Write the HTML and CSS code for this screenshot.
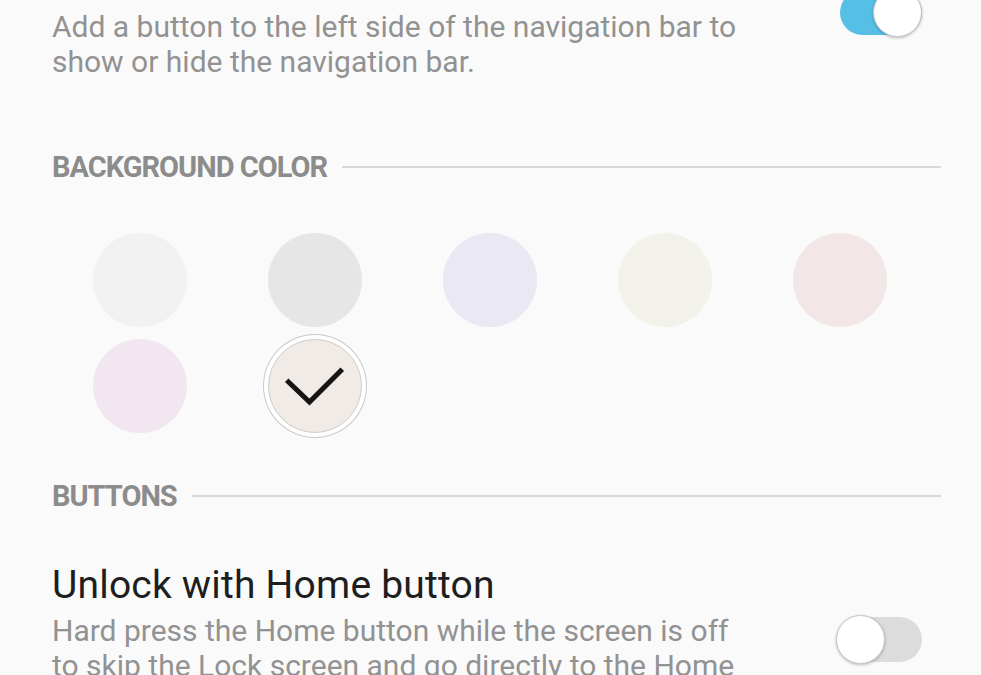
FILE: index.html
```html
<!DOCTYPE html>
<html>
<head>
<meta charset="utf-8">
<link rel="stylesheet" href="styles.css">
</head>
<body>
<div class="page">
  <div class="item item-top">
    <div class="item-text">
      <div class="desc">Add a button to the left side of the navigation bar to show or hide the navigation bar.</div>
    </div>
    <div class="switch switch-on switch-raised"><span class="knob"></span></div>
  </div>

  <div class="section-header header-bg">
    <span class="header-label">BACKGROUND COLOR</span>
    <span class="header-line"></span>
  </div>

  <div class="swatches">
    <div class="swatch-cell"><span class="swatch c1"></span></div>
    <div class="swatch-cell"><span class="swatch c2"></span></div>
    <div class="swatch-cell"><span class="swatch c3"></span></div>
    <div class="swatch-cell"><span class="swatch c4"></span></div>
    <div class="swatch-cell"><span class="swatch c5"></span></div>
    <div class="swatch-cell"><span class="swatch c6"></span></div>
    <div class="swatch-cell"><span class="swatch c7 selected">
      <svg class="check" viewBox="0 0 94 94" width="94" height="94"><path d="M20.5 43 L41.5 63 L72.5 32" fill="none" stroke="#151515" stroke-width="5" stroke-linecap="square" stroke-linejoin="miter"/></svg>
    </span></div>
  </div>

  <div class="section-header header-buttons">
    <span class="header-label">BUTTONS</span>
    <span class="header-line"></span>
  </div>

  <div class="item item-bottom">
    <div class="item-text">
      <div class="title">Unlock with Home button</div>
      <div class="desc">Hard press the Home button while the screen is off to skip the Lock screen and go directly to the Home screen.</div>
    </div>
    <div class="switch switch-off"><span class="knob"></span></div>
  </div>
</div>
</body>
</html>
```
FILE: styles.css
```css
html, body {
  margin: 0;
  padding: 0;
  background: #fafafa;
  overflow: hidden;
}
body {
  width: 981px;
  height: 675px;
  font-family: Roboto, "Noto Sans", sans-serif;
}
.page {
  padding: 0 40px 0 52px;
}
.item {
  display: flex;
  align-items: center;
  justify-content: space-between;
}
.item-text {
  width: 700px;
}
.desc {
  font-size: 30px;
  line-height: 34.5px;
  color: #929292;
}
.title {
  font-size: 39px;
  line-height: 46px;
  letter-spacing: 0.2px;
  color: #1e1e1e;
  margin-bottom: 6px;
}
.item-top {
  padding-top: 10px;
  align-items: flex-start;
}
.switch {
  position: relative;
  width: 82px;
  height: 45px;
  border-radius: 23px;
  margin-right: 19px;
  flex: none;
}
.switch-on {
  background: #56bfe6;
}
.switch-raised {
  margin-top: -20px;
}
.switch-off {
  background: #dcdcdc;
}
.knob {
  position: absolute;
  top: -2px;
  width: 47px;
  height: 47px;
  border-radius: 50%;
  background: #ffffff;
  border: 1px solid #c6c6c6;
  box-shadow: 0 1px 3px rgba(0,0,0,0.25);
}
.switch-on .knob { right: 0; }
.switch-off .knob { left: -4px; }

.section-header {
  display: flex;
  align-items: center;
  height: 36px;
}
.header-bg { margin-top: 70px; }
.header-buttons { margin-top: 45px; }
.header-label {
  font-size: 29px;
  font-weight: 700;
  color: #8c8c8c;
  letter-spacing: -1px;
}
.header-line {
  flex: 1;
  height: 2px;
  background: #d8d8d8;
  margin-left: 15px;
}
.swatches {
  margin-top: 48px;
  display: grid;
  grid-template-columns: repeat(5, 175px);
  row-gap: 12px;
}
.swatch-cell {
  display: flex;
  justify-content: center;
  height: 94px;
}
.swatch {
  display: block;
  width: 94px;
  height: 94px;
  border-radius: 50%;
  box-sizing: border-box;
  position: relative;
}
.c1 { background: #f2f2f2; }
.c2 { background: #e6e6e6; }
.c3 { background: #e9e8f3; }
.c4 { background: #f2f2ea; }
.c5 { background: #f2e6e6; }
.c6 { background: #f2e6f1; }
.c7 { background: #f0ebe6; }
.selected {
  border: 1px solid #d2ccc6;
  box-shadow: 0 0 0 4px #ffffff, 0 0 0 5px #c9c9c9;
}
.check {
  position: absolute;
  left: -1px;
  top: -1px;
}
.item-bottom {
  margin-top: 48px;
}
```
